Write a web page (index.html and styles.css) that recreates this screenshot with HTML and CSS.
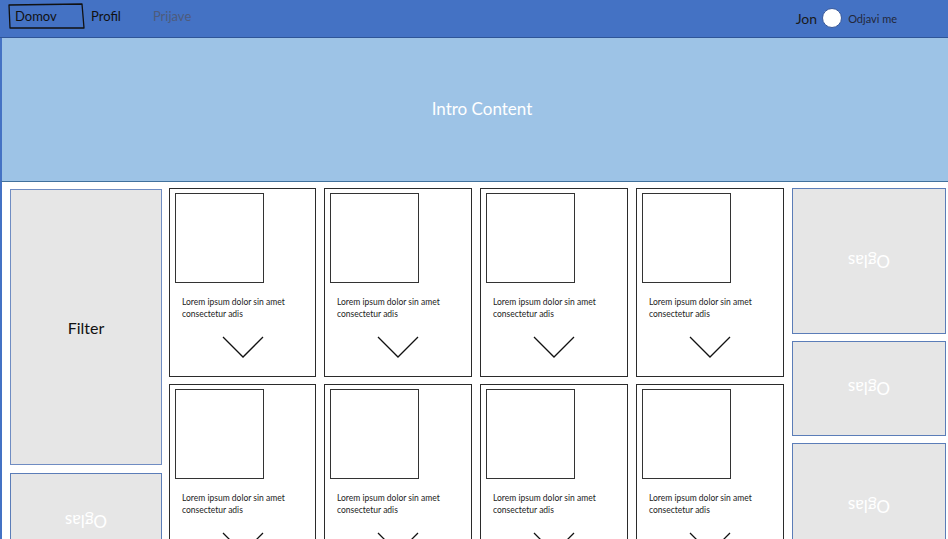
FILE: index.html
```html
<!DOCTYPE html>
<html lang="sl">
<head>
<meta charset="utf-8">
<title>Domov</title>
<link rel="stylesheet" href="styles.css">
</head>
<body>
<header class="nav">
  <nav class="nav-links">
    <a class="nav-link nav-active" href="#">
      <svg class="sketch" width="78" height="28" viewBox="0 0 78 28"><path d="M1 2 L74 1 L76 25 L2 25 Z" fill="none" stroke="#111" stroke-width="1.3" stroke-linejoin="round"/></svg>
      Domov
    </a>
    <a class="nav-link" href="#">Profil</a>
    <a class="nav-link nav-muted" href="#">Prijave</a>
  </nav>
  <div class="user">
    <span class="user-name">Jon</span>
    <span class="avatar"></span>
    <a class="logout" href="#">Odjavi me</a>
  </div>
</header>

<section class="intro">Intro Content</section>

<main class="content">
  <aside class="left-col">
    <div class="filter">Filter</div>
    <div class="ad ad-left"><span class="ad-text">Oglas</span></div>
  </aside>

  <section class="cards">
    <article class="card"><div class="thumb"></div><p class="card-text">Lorem ipsum dolor sin amet consectetur adis</p><svg class="chev" width="42" height="22" viewBox="0 0 42 22"><path d="M1 1 L21 21 L41 1" fill="none" stroke="#111" stroke-width="1.3"/></svg></article>
    <article class="card"><div class="thumb"></div><p class="card-text">Lorem ipsum dolor sin amet consectetur adis</p><svg class="chev" width="42" height="22" viewBox="0 0 42 22"><path d="M1 1 L21 21 L41 1" fill="none" stroke="#111" stroke-width="1.3"/></svg></article>
    <article class="card"><div class="thumb"></div><p class="card-text">Lorem ipsum dolor sin amet consectetur adis</p><svg class="chev" width="42" height="22" viewBox="0 0 42 22"><path d="M1 1 L21 21 L41 1" fill="none" stroke="#111" stroke-width="1.3"/></svg></article>
    <article class="card"><div class="thumb"></div><p class="card-text">Lorem ipsum dolor sin amet consectetur adis</p><svg class="chev" width="42" height="22" viewBox="0 0 42 22"><path d="M1 1 L21 21 L41 1" fill="none" stroke="#111" stroke-width="1.3"/></svg></article>
    <article class="card"><div class="thumb"></div><p class="card-text">Lorem ipsum dolor sin amet consectetur adis</p><svg class="chev" width="42" height="22" viewBox="0 0 42 22"><path d="M1 1 L21 21 L41 1" fill="none" stroke="#111" stroke-width="1.3"/></svg></article>
    <article class="card"><div class="thumb"></div><p class="card-text">Lorem ipsum dolor sin amet consectetur adis</p><svg class="chev" width="42" height="22" viewBox="0 0 42 22"><path d="M1 1 L21 21 L41 1" fill="none" stroke="#111" stroke-width="1.3"/></svg></article>
    <article class="card"><div class="thumb"></div><p class="card-text">Lorem ipsum dolor sin amet consectetur adis</p><svg class="chev" width="42" height="22" viewBox="0 0 42 22"><path d="M1 1 L21 21 L41 1" fill="none" stroke="#111" stroke-width="1.3"/></svg></article>
    <article class="card"><div class="thumb"></div><p class="card-text">Lorem ipsum dolor sin amet consectetur adis</p><svg class="chev" width="42" height="22" viewBox="0 0 42 22"><path d="M1 1 L21 21 L41 1" fill="none" stroke="#111" stroke-width="1.3"/></svg></article>
  </section>

  <aside class="right-col">
    <div class="ad ad-r1"><span class="ad-text">Oglas</span></div>
    <div class="ad ad-r2"><span class="ad-text">Oglas</span></div>
    <div class="ad ad-r3"><span class="ad-text">Oglas</span></div>
  </aside>
</main>
</body>
</html>
```
FILE: styles.css
```css
* { box-sizing: border-box; }
html, body {
  margin: 0;
  padding: 0;
  height: 539px;
  overflow: hidden;
  background: #fff;
  font-family: Lato, "Open Sans", "Liberation Sans", sans-serif;
}

.nav {
  height: 38px;
  background: #4472C4;
  border-bottom: 1px solid #2F5597;
  display: flex;
  align-items: flex-start;
  justify-content: space-between;
}
.nav-links {
  display: flex;
  align-items: center;
  padding: 3px 0 0 8px;
}
.nav-link {
  position: relative;
  display: block;
  height: 26px;
  line-height: 26px;
  font-size: 13px;
  color: #111;
  text-decoration: none;
}
.nav-active {
  width: 83px;
  padding-left: 7px;
}
.sketch {
  position: absolute;
  left: 0;
  top: 0;
}
.nav-muted {
  color: #4E5B7C;
  margin-left: 32px;
}
.user {
  display: flex;
  align-items: center;
  padding: 8px 51px 0 0;
}
.user-name {
  font-size: 14px;
  color: #1a1a1a;
}
.avatar {
  width: 20px;
  height: 20px;
  border-radius: 50%;
  background: #fff;
  border: 1px solid #3a5a9a;
  margin: 0 6px 0 5px;
}
.logout {
  font-size: 11px;
  color: #23283a;
  text-decoration: none;
}

.intro {
  height: 144px;
  background: #9DC3E6;
  border-left: 2px solid #4472C4;
  border-bottom: 1px solid #41719C;
  display: flex;
  align-items: center;
  justify-content: center;
  padding-left: 14px;
  padding-bottom: 2px;
  color: #fff;
  font-size: 17px;
}

.content {
  height: 357px;
  overflow: hidden;
  border-left: 2px solid #4472C4;
  padding: 6px 0 0 8px;
  display: flex;
  align-items: flex-start;
  gap: 7px;
}

.left-col {
  width: 152px;
  display: flex;
  flex-direction: column;
  gap: 8px;
  padding-top: 1px;
}
.filter {
  height: 276px;
  background: #E6E6E6;
  border: 1px solid #6F8CC2;
  display: flex;
  align-items: center;
  justify-content: center;
  font-size: 16px;
  color: #111;
}

.ad {
  background: #E6E6E6;
  border: 1px solid #5B7DB8;
  display: flex;
  align-items: center;
  justify-content: center;
}
.ad-text {
  display: block;
  transform: rotate(180deg);
  color: #fff;
  font-size: 17px;
}
.ad-left { height: 94px; padding-top: 2px; }

.cards {
  width: 616px;
  display: grid;
  grid-template-columns: 147px 148px 148px 148px;
  grid-auto-rows: 189px;
  column-gap: 8px;
  row-gap: 7px;
}
.card {
  border: 1px solid #2b2b2b;
  padding: 4px 0 0 5px;
  display: flex;
  flex-direction: column;
}
.thumb {
  width: 89px;
  height: 90px;
  border: 1px solid #333;
}
.card-text {
  margin: 13px 0 0 7px;
  width: 120px;
  font-size: 8.5px;
  line-height: 12px;
  color: #222;
}
.chev {
  display: block;
  margin: 16px 0 0 47px;
}

.right-col {
  width: 154px;
  display: flex;
  flex-direction: column;
  gap: 7px;
}
.ad-r1 { height: 146px; }
.ad-r2 { height: 95px; }
.ad-r3 { height: 126px; }
```
